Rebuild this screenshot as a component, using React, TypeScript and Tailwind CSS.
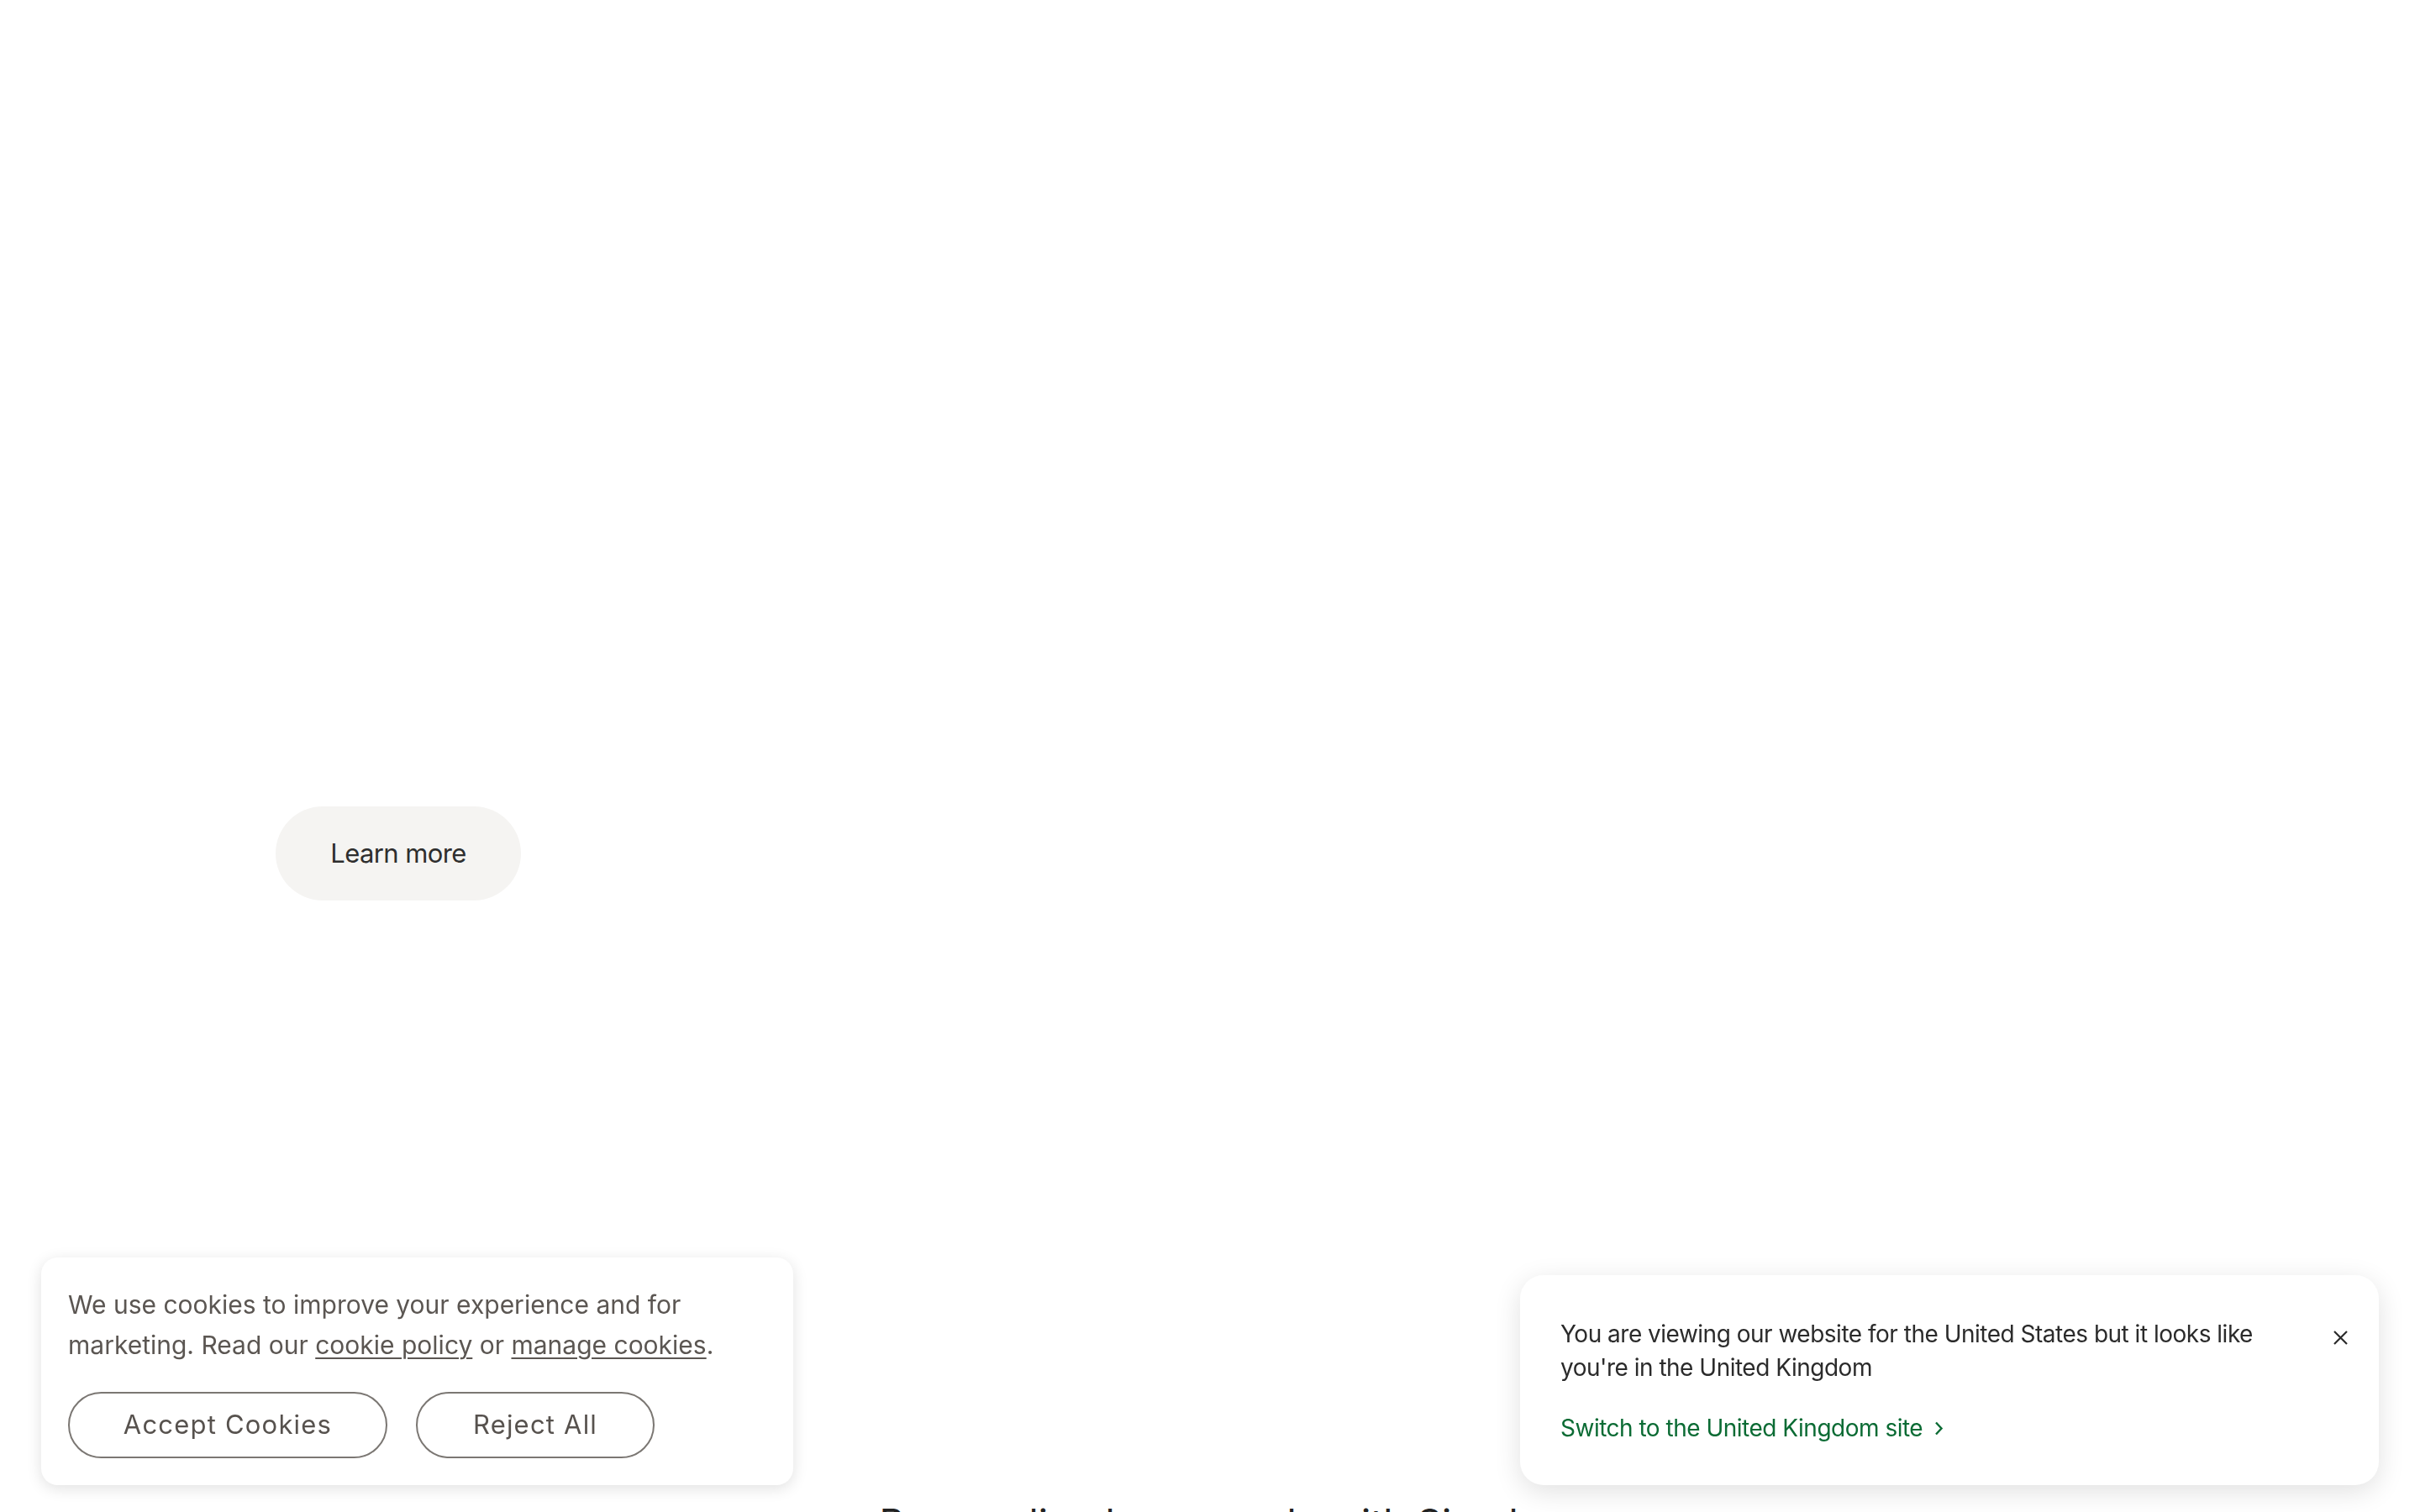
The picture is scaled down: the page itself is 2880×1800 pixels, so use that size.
import React from 'react';

const font = { fontFamily: 'Inter, "Noto Sans", sans-serif' };

const CookieBanner = () => {
    return (
        <div className="fixed left-[49px] bottom-[32px] w-[895px] rounded-[20px] bg-white p-8 shadow-[0_4px_18px_rgba(0,0,0,0.12)]">
            <p className="text-[30px] leading-[48px] text-[#5b5652]">
                We use cookies to improve your experience and for<br />
                marketing. Read our <a href="#" className="underline underline-offset-4 decoration-2">cookie policy</a> or{' '}
                <a href="#" className="underline underline-offset-4 decoration-2">manage cookies</a>.
            </p>
            <div className="mt-8 flex gap-[34px]">
                <button className="h-[79px] w-[380px] rounded-full border-2 border-[#7b7773] text-[31px] tracking-[1.2px] text-[#57524e]">
                    Accept Cookies
                </button>
                <button className="h-[79px] w-[284px] rounded-full border-2 border-[#7b7773] text-[31px] tracking-[1.2px] text-[#57524e]">
                    Reject All
                </button>
            </div>
        </div>
    );
};

const RegionBanner = () => {
    return (
        <div className="fixed right-[49px] bottom-[32px] w-[1022px] rounded-[28px] bg-white px-12 pt-[50px] pb-12 shadow-[0_8px_32px_rgba(0,0,0,0.12)]">
            <div className="flex items-start justify-between">
                <p className="text-[28px] leading-[40px] tracking-[-0.5px] text-[#2b2b2b]">
                    You are viewing our website for the United States but it looks like<br />
                    you're in the United Kingdom
                </p>
                <button className="mt-[16px] -mr-[11px] text-[#2b2b2b]">
                    <svg width="17" height="17" viewBox="0 0 17 17" fill="none" stroke="currentColor" strokeWidth="2.2">
                        <path d="M1 1L16 16M16 1L1 16" />
                    </svg>
                </button>
            </div>
            <a href="#" className="mt-8 flex items-center gap-[14px] text-[28px] leading-[40px] tracking-[-0.5px] text-[#0b6b34]">
                Switch to the United Kingdom site
                <svg width="11" height="17" viewBox="0 0 11 17" fill="none" stroke="currentColor" strokeWidth="2.4">
                    <path d="M2 1.5L8.5 8.5L2 15.5" />
                </svg>
            </a>
        </div>
    );
};

const App = () => {
    return (
        <div className="min-h-screen bg-white" style={font}>
            {/* HERO START */}
            <section className="pl-[328px] pt-[960px]">
                <button className="h-[112px] w-[292px] rounded-full bg-[#f5f4f2] text-[31px] tracking-[-0.6px] text-[#2e2e2e]">
                    Learn more
                </button>
            </section>
            {/* HERO END */}

            <section className="pt-[713px] pb-40">
                <h2 className="text-center text-[46px] leading-[56px] text-[#222222]">
                    Personalized care made with Simple
                </h2>
            </section>

            <CookieBanner />
            <RegionBanner />
        </div>
    );
};

export default App;
